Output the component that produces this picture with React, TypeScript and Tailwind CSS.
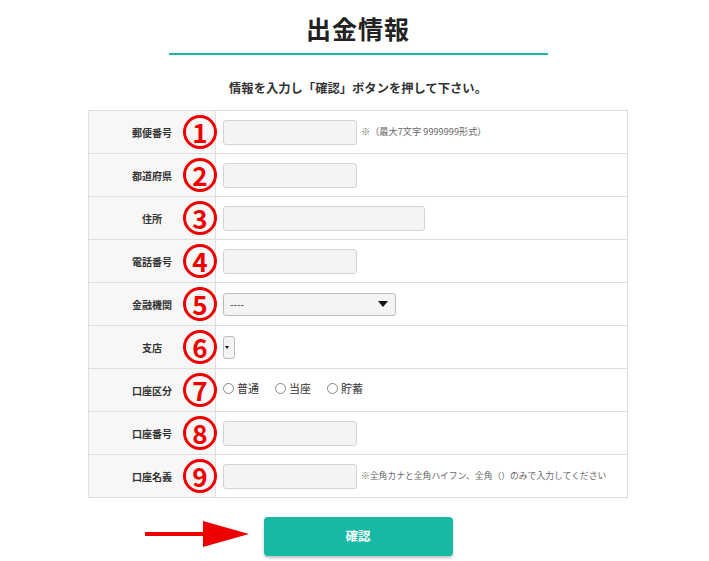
import React from 'react';

const FONT = { fontFamily: '"Noto Sans CJK JP", "Noto Sans", sans-serif' };

type Row = {
  label: string;
  num: string;
  field: React.ReactNode;
};

const TextBox = ({ w = 'w-[134px]' }: { w?: string }) => (
  <div className={`${w} h-[25px] rounded-[3px] border border-[#d3d3d3] bg-[#f4f4f4]`}></div>
);

const Note = ({ children, size = 'text-[9.2px]' }: { children: React.ReactNode; size?: string }) => (
  <span className={`ml-[4px] ${size} text-[#666]`}>{children}</span>
);

const Radio = ({ label }: { label: string }) => (
  <label className="flex items-center gap-[3px] text-[11px] text-[#333]">
    <span className="w-[11px] h-[11px] rounded-full border border-[#8a8a8a] bg-white"></span>
    {label}
  </label>
);

const rows: Row[] = [
  {
    label: '郵便番号',
    num: '1',
    field: (
      <>
        <TextBox />
        <Note>※（最大7文字 9999999形式）</Note>
      </>
    ),
  },
  { label: '都道府県', num: '2', field: <TextBox /> },
  { label: '住所', num: '3', field: <TextBox w="w-[202px]" /> },
  { label: '電話番号', num: '4', field: <TextBox /> },
  {
    label: '金融機関',
    num: '5',
    field: (
      <div className="w-[173px] h-[23px] rounded-[3px] border border-[#bdbdbd] bg-[#f4f4f4] flex items-center justify-between pl-[6px] pr-[7px]">
        <span className="text-[10px] text-[#333] leading-none">----</span>
        <span className="w-0 h-0 border-l-[5px] border-r-[5px] border-t-[6px] border-l-transparent border-r-transparent border-t-[#111]"></span>
      </div>
    ),
  },
  {
    label: '支店',
    num: '6',
    field: (
      <div className="w-[12px] h-[23px] rounded-[3px] border border-[#bdbdbd] bg-[#f4f4f4] flex items-center pl-[1px]">
        <span className="w-0 h-0 border-l-[2px] border-r-[2px] border-t-[3px] border-l-transparent border-r-transparent border-t-[#111]"></span>
      </div>
    ),
  },
  {
    label: '口座区分',
    num: '7',
    field: (
      <div className="flex items-center gap-[16px] -mt-[4px]">
        <Radio label="普通" />
        <Radio label="当座" />
        <Radio label="貯蓄" />
      </div>
    ),
  },
  { label: '口座番号', num: '8', field: <TextBox /> },
  {
    label: '口座名義',
    num: '9',
    field: (
      <>
        <TextBox />
        <Note size="text-[8.8px]">※全角カナと全角ハイフン、全角（）のみで入力してください</Note>
      </>
    ),
  },
];

export default function App() {
  return (
    <div className="w-[709px] h-[561px] bg-white overflow-hidden" style={FONT}>
      <div className="ml-[88px] w-[540px] flex flex-col items-center">
        <h1 className="mt-[11px] text-[25px] font-bold text-[#222] leading-[34px] tracking-[1px]">出金情報</h1>
        <div className="mt-[8px] w-[379px] h-[2px] bg-[#1bb9a4]"></div>
        <p className="mt-[24px] text-[12.3px] font-bold text-[#333] leading-[18px]">
          情報を入力し「確認」ボタンを押して下さい。
        </p>

        <div className="mt-[13px] w-full border border-[#dedede]">
          {rows.map((r, i) => (
            <div
              key={r.label}
              className={`relative flex ${i === rows.length - 1 ? 'h-[42px]' : 'h-[43px] border-b border-[#dedede]'}`}
            >
              <div className="w-[127px] shrink-0 bg-[#f7f7f7] border-r border-[#dedede] flex items-center justify-center">
                <span className="text-[10px] font-bold text-[#333]">{r.label}</span>
              </div>
              <div className="flex items-center pl-[7px]">{r.field}</div>
              <span className="absolute left-[94px] top-[4px] w-[34px] h-[34px] rounded-full border-[3px] border-[#ee0000] flex items-center justify-center text-[26px] font-bold text-[#ee0000] leading-none">
                {r.num}
              </span>
            </div>
          ))}
        </div>
      </div>

      <div className="relative mt-[19px] flex justify-center ml-[7px]">
        <div className="absolute left-[138px] top-[4px] flex items-center">
          <div className="w-[62px] h-[4px] bg-[#ee0000]"></div>
          <div className="w-0 h-0 border-t-[13px] border-b-[13px] border-l-[46px] border-t-transparent border-b-transparent border-l-[#ee0000] -ml-[4px]"></div>
        </div>
        <button className="w-[189px] h-[39px] rounded-[4px] bg-[#17b9a5] text-white text-[12.5px] font-bold shadow-[0_2px_3px_rgba(0,0,0,0.25)]">
          確認
        </button>
      </div>
    </div>
  );
}
